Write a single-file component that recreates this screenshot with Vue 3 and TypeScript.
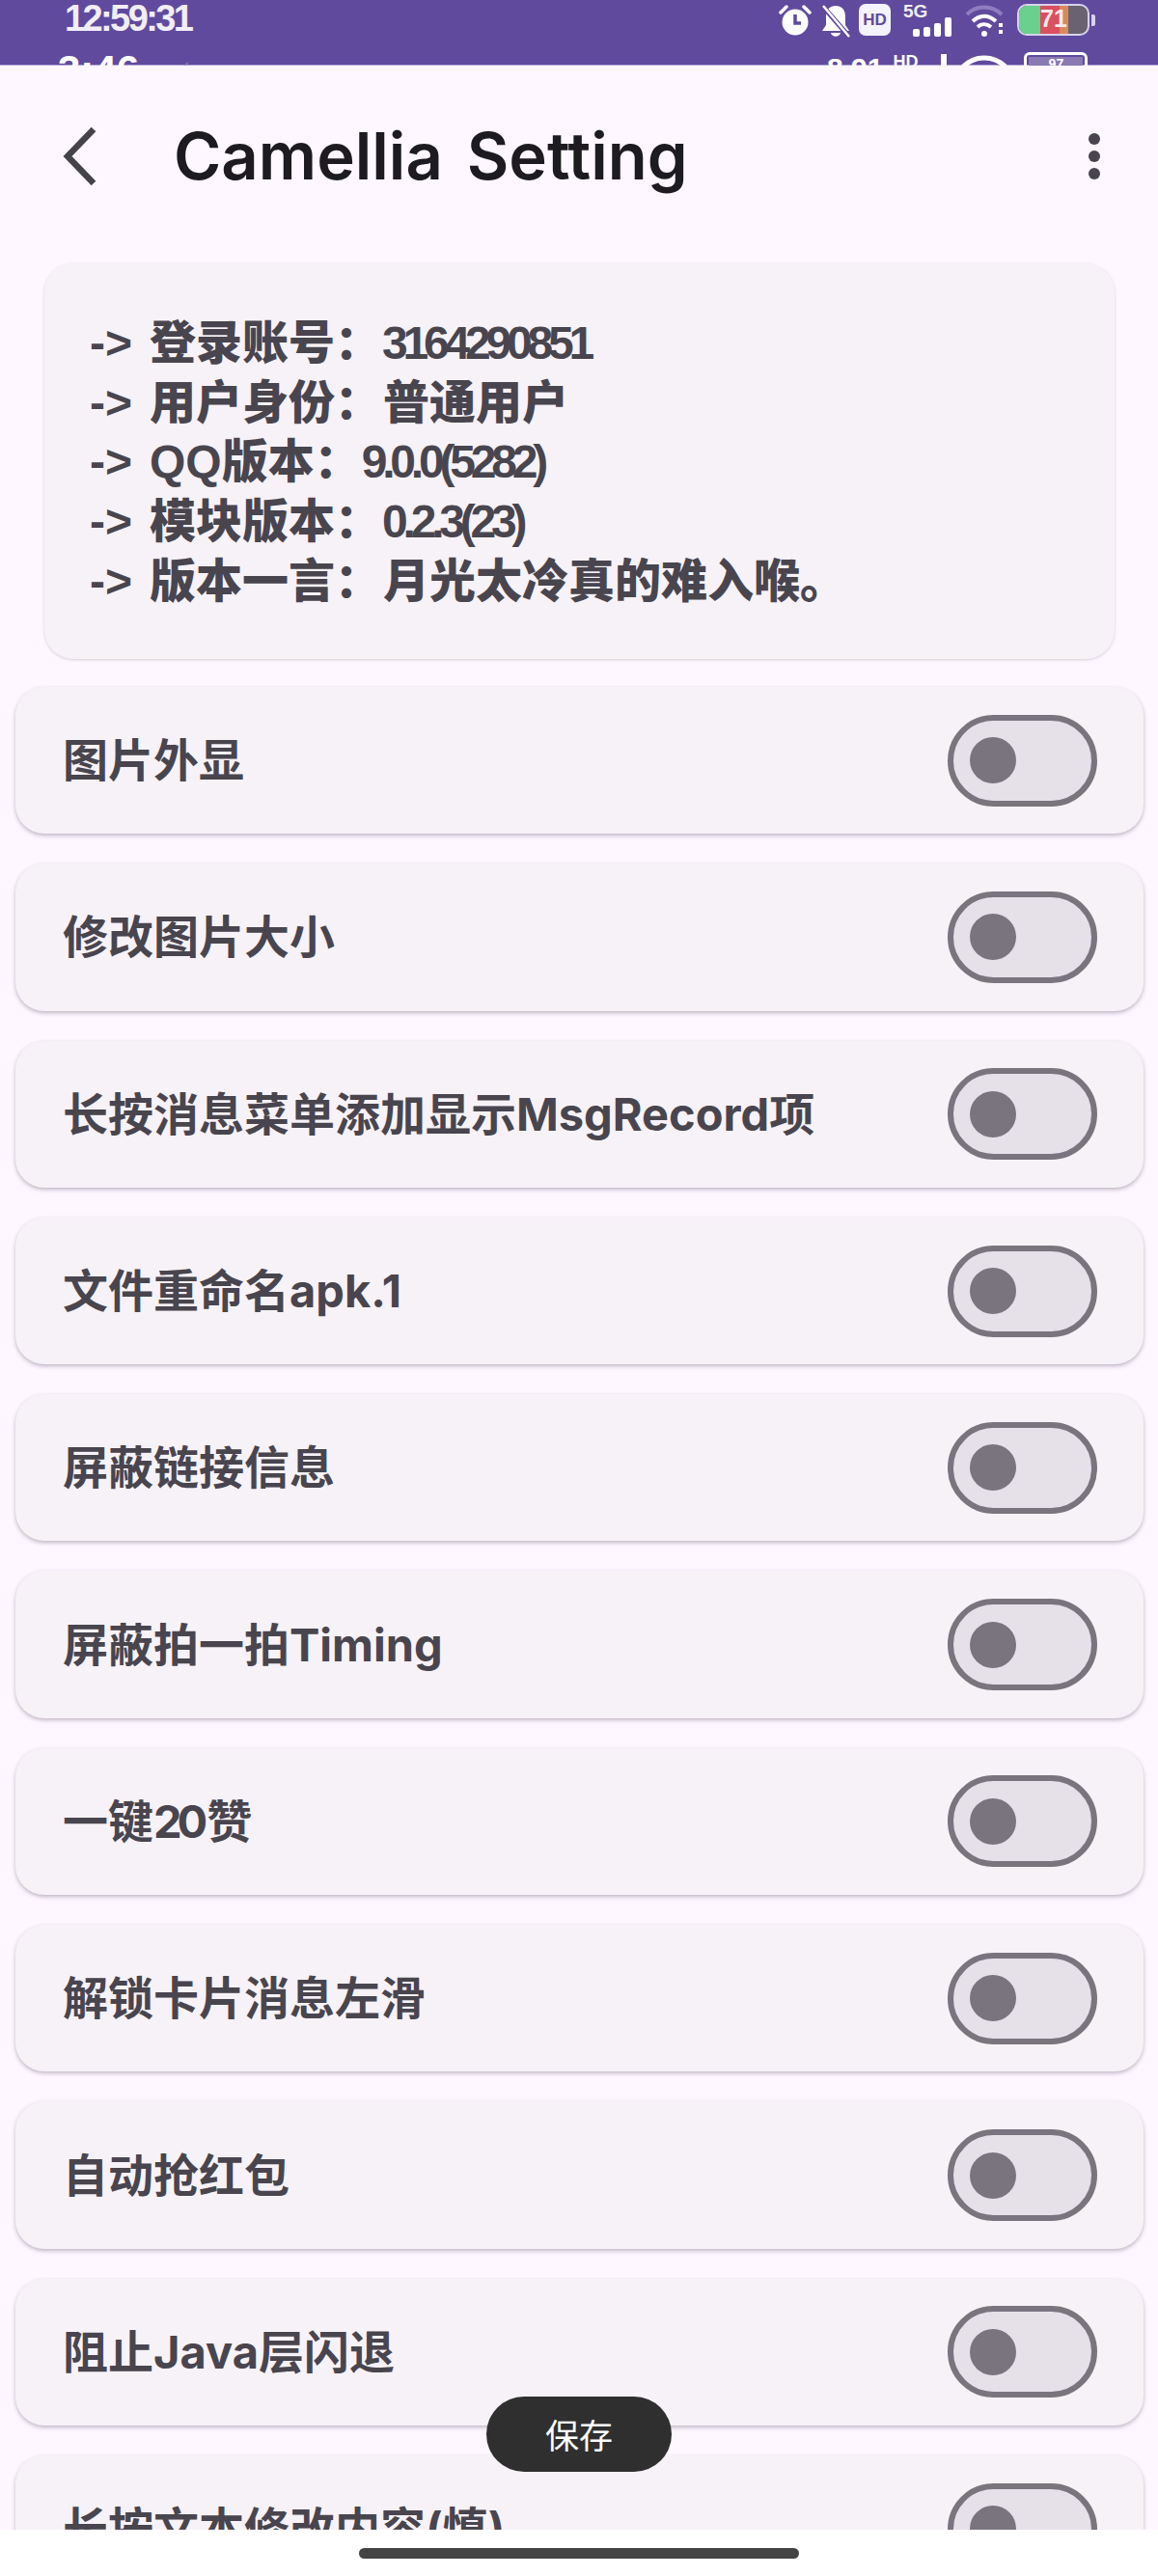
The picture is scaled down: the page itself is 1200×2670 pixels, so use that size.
<script setup lang="ts">
interface InfoLine { label: string; value: string; tight: boolean }
interface Row { before: string; tight?: string; after?: string }

const info: InfoLine[] = [
  { label: '登录账号：', value: '3164290851', tight: true },
  { label: '用户身份：', value: '普通用户', tight: false },
  { label: 'QQ版本：', value: '9.0.0(5282)', tight: true },
  { label: '模块版本：', value: '0.2.3(23)', tight: true },
  { label: '版本一言：', value: '月光太冷真的难入喉。', tight: false },
]
const rows: Row[] = [
  { before: '图片外显' },
  { before: '修改图片大小' },
  { before: '长按消息菜单添加显示MsgRecord项' },
  { before: '文件重命名apk.1' },
  { before: '屏蔽链接信息' },
  { before: '屏蔽拍一拍Timing' },
  { before: '一键', tight: '20', after: '赞' },
  { before: '解锁卡片消息左滑' },
  { before: '自动抢红包' },
  { before: '阻止Java层闪退' },
  { before: '长按文本修改内容(慎)' },
]
</script>

<template>
  <div class="page">
    <div class="status">
      <span class="clock">12:59:31</span>
      <div class="status-icons">
        <svg class="i-alarm" width="34" height="34" viewBox="0 0 34 34">
          <circle cx="17" cy="19" r="13.5" fill="#fff" />
          <path d="M17 11v9h6" fill="none" stroke="#604a9e" stroke-width="3.5" />
          <path d="M2 9 8 3M32 9l-6-6" stroke="#fff" stroke-width="3.5" stroke-linecap="round" />
        </svg>
        <svg class="i-bell" width="32" height="36" viewBox="0 0 32 36">
          <path d="M16 2c-7 0-10 5-10 11v9l-4 6h28l-4-6v-9c0-6-3-11-10-11zM11 30h10c-1 5-9 5-10 0z" fill="#fff" />
          <path d="M3 3l27 31" stroke="#604a9e" stroke-width="5" />
          <path d="M3 2l27 32" stroke="#fff" stroke-width="2.5" />
        </svg>
        <span class="hd">HD</span>
        <div class="net">
          <span class="five-g">5G</span>
          <svg width="42" height="20" viewBox="0 0 42 20">
            <rect x="0" y="12" width="7" height="8" rx="2" fill="#fff" />
            <rect x="11" y="10" width="7" height="10" rx="2" fill="#fff" />
            <rect x="22" y="6" width="7" height="14" rx="2" fill="#fff" />
            <rect x="33" y="0" width="7" height="20" rx="2" fill="#fff" />
          </svg>
        </div>
        <svg class="i-wifi" width="42" height="34" viewBox="0 0 42 34">
          <path d="M2 11C12 1 28 1 38 11" fill="none" stroke="#8f7dc0" stroke-width="4" />
          <path d="M8 18c8-7 16-7 24 0" fill="none" stroke="#fff" stroke-width="4" />
          <path d="M13 24c5-4 9-4 14 0" fill="none" stroke="#fff" stroke-width="4" />
          <circle cx="20" cy="31" r="3" fill="#fff" />
          <path d="M37 20v12" stroke="#fff" stroke-width="4" stroke-dasharray="4 3" />
        </svg>
        <div class="battery">
          <div class="battery-body">
            <span class="bat-g"></span><span class="bat-r"></span><span class="bat-o"></span>
            <span class="bat-label">71</span>
          </div>
          <span class="battery-tip"></span>
        </div>
      </div>
    </div>

    <div class="ghost-left">
      <span class="ghost-time">3:46</span>
      <svg class="ghost-dl" width="16" height="18" viewBox="0 0 16 18">
        <path d="M10 1C6 3 6 6 9 8s2 5-2 6M2 17h12M3 10l5 5 5-5" fill="none" stroke="#8d8794" stroke-width="1.2" />
      </svg>
    </div>
    <div class="ghost-right">
      <span class="ghost-speed">8.91</span>
      <span class="ghost-hd">HD</span>
      <svg width="24" height="30" viewBox="0 0 24 30">
        <rect x="0" y="14" width="6" height="16" fill="#fff" />
        <rect x="14" y="2" width="6" height="28" fill="#fff" />
      </svg>
      <svg width="50" height="36" viewBox="0 0 50 36">
        <path d="M3 15C16 3 34 3 47 15" fill="none" stroke="#fff" stroke-width="5" />
      </svg>
      <div class="ghost-bat"><span>97</span></div>
    </div>

    <div class="screen">
      <header class="bar">
        <svg class="back" width="40" height="64" viewBox="0 0 40 64">
          <path d="M33 4 6 32l27 28" fill="none" stroke="#45434a" stroke-width="6.5" />
        </svg>
        <h1 class="title">Camellia Setting</h1>
        <span class="dots"><i></i><i></i><i></i></span>
      </header>

      <section class="info">
        <p v-for="line in info" :key="line.label" class="info-line">
          <span class="arrow">-&gt;</span>
          <span class="info-label">{{ line.label }}</span>
          <span :class="line.tight ? 'value-tight' : 'value'">{{ line.value }}</span>
        </p>
      </section>

      <div class="list">
        <div v-for="row in rows" :key="row.before" class="row">
          <span class="label">{{ row.before }}<span v-if="row.tight" class="label-tight">{{ row.tight }}</span>{{ row.after }}</span>
          <span class="switch"><span class="knob"></span></span>
        </div>
      </div>

      <button class="save" type="button">保存</button>
    </div>

    <footer class="nav"><span class="home"></span></footer>
  </div>
</template>

<style>
html, body { margin: 0; background: #fff; }
</style>

<style scoped>
.page {
  position: relative;
  width: 1200px;
  height: 2670px;
  display: flex;
  flex-direction: column;
  overflow: hidden;
  background: #fff;
  font-family: "Liberation Sans", "Noto Sans CJK SC", sans-serif;
}
.status {
  flex: none;
  height: 67px;
  background: #604a9e;
  border-bottom: 1px solid #b5a6d6;
  display: flex;
  justify-content: space-between;
  padding: 0 65px 0 67px;
}
.clock {
  color: #f1eef8;
  font: 700 38px/37px "Liberation Sans", sans-serif;
  letter-spacing: -2.6px;
  margin-top: 1px;
  height: 37px;
}
.status-icons {
  display: flex;
  align-items: flex-start;
  padding-top: 4px;
}
.i-bell { margin-left: 9px; }
.hd {
  width: 33px;
  height: 33px;
  margin-left: 8px;
  border-radius: 7px;
  background: #f4f2fa;
  color: #604a9e;
  font: 700 17px/33px "Liberation Sans", sans-serif;
  text-align: center;
}
.net {
  width: 50px;
  margin-left: 13px;
  display: flex;
  flex-direction: column;
  align-items: flex-start;
}
.five-g {
  color: #f1eef8;
  font: 700 19px/16px "Liberation Sans", sans-serif;
  height: 14px;
}
.net svg { margin-left: 10px; }
.i-wifi { margin-left: 14px; }
.battery {
  display: flex;
  align-items: center;
  margin-left: 12px;
}
.battery-body {
  position: relative;
  width: 75px;
  height: 33px;
  box-sizing: border-box;
  border: 2px solid #d8d3ea;
  border-radius: 10px;
  overflow: hidden;
  background: #6a6270;
  display: flex;
}
.bat-g { width: 22px; background: #6ad08e; }
.bat-r { width: 20px; background: #d9505f; }
.bat-o { width: 9px; background: #d88a5c; }
.bat-label {
  position: absolute;
  left: 22px;
  top: 0;
  color: #f5e9ea;
  font: 700 25px/27px "Liberation Sans", sans-serif;
}
.battery-tip {
  width: 4px;
  height: 12px;
  background: #d8d3ea;
  border-radius: 0 2px 2px 0;
  margin-left: 2px;
}
.ghost-left {
  position: absolute;
  left: 60px;
  top: 52px;
  display: flex;
  align-items: flex-start;
  gap: 41px;
}
.ghost-time {
  color: #fff;
  font: 700 42px/42px "Liberation Sans", sans-serif;
}
.ghost-dl { margin-top: 12px; }
.ghost-right {
  position: absolute;
  left: 857px;
  top: 54px;
  display: flex;
  align-items: flex-start;
  gap: 10px;
  color: #fff;
}
.ghost-speed { font: 700 30px/34px "Liberation Sans", sans-serif; }
.ghost-hd { font: 700 18px/20px "Liberation Sans", sans-serif; }
.ghost-bat {
  width: 66px;
  height: 30px;
  margin-left: 6px;
  border: 3px solid #fff;
  border-radius: 6px;
  padding: 2px;
  box-sizing: border-box;
}
.ghost-bat span {
  display: block;
  height: 100%;
  background: #8a7ab4;
  font: 700 14px/15px "Liberation Sans", sans-serif;
  text-align: center;
}
.screen {
  position: relative;
  flex: 1;
  min-height: 0;
  overflow: hidden;
  background: #fef7ff;
}
.bar {
  height: 188px;
  box-sizing: border-box;
  padding: 0 60px 0 64px;
  display: flex;
  align-items: center;
}
.back { flex: none; }
.title {
  flex: 1;
  margin: 0 0 0 76px;
  color: #1d1b20;
  font: 600 67px/80px Inter, "Liberation Sans", sans-serif;
  word-spacing: 8px;
}
.dots {
  display: flex;
  flex-direction: column;
  gap: 6px;
}
.dots i {
  display: block;
  width: 12px;
  height: 12px;
  border-radius: 50%;
  background: #49454f;
}
.info {
  margin: 17px 45px 0 46px;
  height: 410px;
  box-sizing: border-box;
  padding: 52px 0 0 47px;
  background: #f7f2f7;
  border-radius: 30px;
  box-shadow: 0 1px 3px rgba(120, 100, 130, 0.28);
}
.info-line {
  margin: 0;
  height: 61.7px;
  display: flex;
  align-items: baseline;
  color: #49454f;
  font: 900 48px/61.7px "Liberation Sans", "Noto Sans CJK SC", sans-serif;
  white-space: nowrap;
}
.arrow { width: 62px; font-weight: 700; flex: none; }
.info-label { flex: none; }
.value-tight { letter-spacing: -5.2px; margin-left: 1px; font-weight: 700; }
.value { margin-left: 2px; }
.list {
  margin: 29px 15px 0 16px;
  display: flex;
  flex-direction: column;
  gap: 31px;
}
.row {
  flex: none;
  height: 152.3px;
  box-sizing: border-box;
  padding: 0 48px 0 49px;
  display: flex;
  align-items: center;
  justify-content: space-between;
  background: #f7f2f7;
  border-radius: 30px;
  box-shadow: 0 2px 4px rgba(90, 75, 100, 0.38);
}
.label {
  color: #49454f;
  font: 700 47px/60px Inter, "Noto Sans CJK SC", sans-serif;
  white-space: nowrap;
}
.label-tight { letter-spacing: -5px; margin-right: 4px; }
.switch {
  width: 155px;
  height: 95px;
  box-sizing: border-box;
  border: 6px solid #79747e;
  border-radius: 48px;
  background: #e6e0e9;
  display: flex;
  align-items: center;
  padding-left: 17px;
}
.knob {
  width: 48px;
  height: 48px;
  border-radius: 50%;
  background: #79747e;
}
.save {
  position: absolute;
  left: 504px;
  top: 2416px;
  width: 192px;
  height: 78px;
  border: 0;
  border-radius: 39px;
  background: #2f2f2f;
  color: #fff;
  font: 400 35px/78px "Noto Sans CJK SC", sans-serif;
  padding: 0;
}
.nav {
  flex: none;
  height: 48px;
  background: #fff;
  position: relative;
}
.home {
  position: absolute;
  left: 372px;
  top: 19px;
  width: 456px;
  height: 11px;
  border-radius: 6px;
  background: #444;
}
</style>
